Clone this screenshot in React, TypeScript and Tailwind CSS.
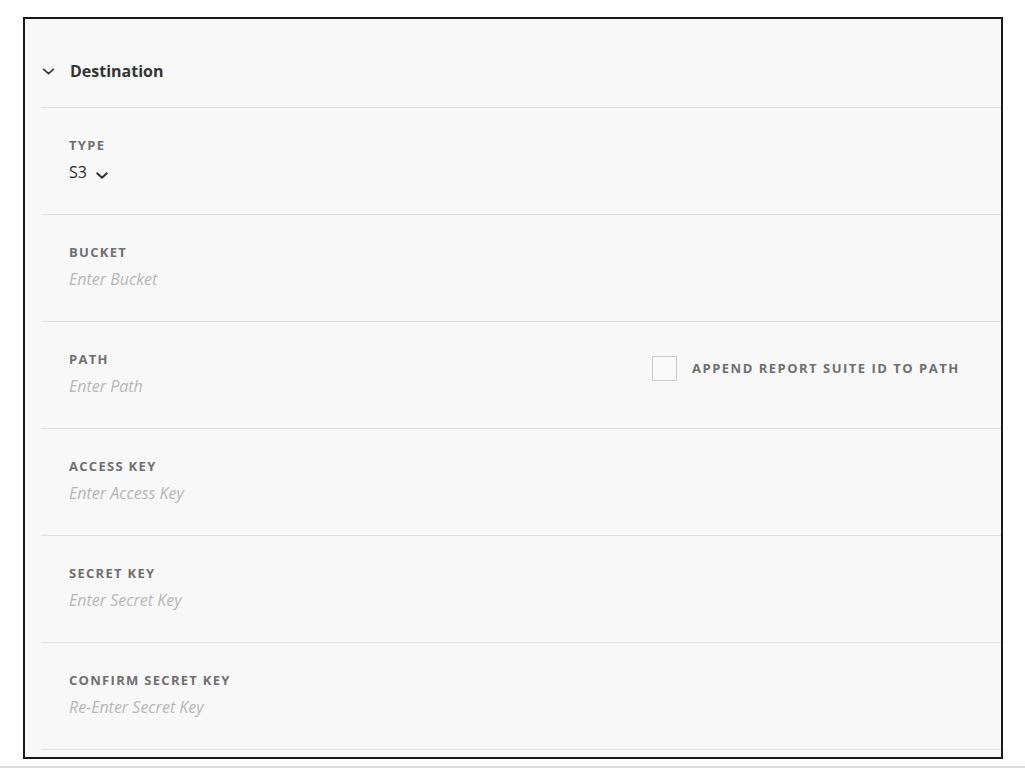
import React from "react";

const fields = [
  { label: "BUCKET", placeholder: "Enter Bucket" },
  { label: "PATH", placeholder: "Enter Path", append: true },
  { label: "ACCESS KEY", placeholder: "Enter Access Key" },
  { label: "SECRET KEY", placeholder: "Enter Secret Key" },
  { label: "CONFIRM SECRET KEY", placeholder: "Re-Enter Secret Key" },
];

function Chevron({ className }: { className?: string }) {
  return (
    <svg viewBox="0 0 14 8" className={className} fill="none" stroke="currentColor" strokeLinecap="round" strokeLinejoin="round">
      <path d="M1.5 1.5 7 6.5l5.5-5" />
    </svg>
  );
}

export default function App() {
  return (
    <div className="min-h-[771px] bg-white" style={{ fontFamily: '"Open Sans", "Liberation Sans", sans-serif' }}>
      <div className="pl-[23px] pt-[17px]">
        {/* рамка формы */}
        <div className="h-[742px] w-[980px] overflow-hidden border-2 border-[#1a1a1a] bg-[#f8f8f8] pl-[16px]">
          {/* Header */}
          <div className="flex h-[89px] items-start border-b border-[#e1e1e1] pt-[40px]">
            <div className="flex h-6 items-center">
              <Chevron className="ml-[1px] h-[7px] w-[13px] stroke-[2] text-[#3c3c3c]" />
              <span className="ml-[15px] text-[16px] font-bold leading-6 text-[#333333]">Destination</span>
            </div>
          </div>

          {/* Type */}
          <div className="h-[107px] border-b border-[#e1e1e1] pl-[28px] pt-[29px]">
            <div className="text-[13px] font-bold leading-4 tracking-[1.3px] text-[#6f6f6f]">TYPE</div>
            <div className="mt-2 flex h-[22px] items-center text-[16px] text-[#2c2c2c]">
              <span className="leading-[22px]">S3</span>
              <Chevron className="ml-[7px] mt-[7px] h-[7px] w-[16px] stroke-[2.2] text-[#2c2c2c]" />
            </div>
          </div>

          {fields.map((f) => (
            <div key={f.label} className="flex h-[107px] items-start border-b border-[#e1e1e1] pl-[28px] pt-[29px]">
              <div className="w-[583px]">
                <div className="text-[13px] font-bold leading-4 tracking-[1.3px] text-[#6f6f6f]">{f.label}</div>
                <div className="mt-2 text-[16px] italic leading-[22px] text-[#b6b6b6]">{f.placeholder}</div>
              </div>
              {f.append && (
                <div className="mt-[5px] flex items-center">
                  <div className="h-[25px] w-[25px] border border-[#cbcbcb] bg-[#fafafa]" />
                  <span className="ml-[15px] text-[13px] font-bold tracking-[1.5px] text-[#6f6f6f]">
                    APPEND REPORT SUITE ID TO PATH
                  </span>
                </div>
              )}
            </div>
          ))}
        </div>
      </div>
      <div className="mt-[7px] h-[2px] w-full bg-[#dcdcdc]" />
    </div>
  );
}
